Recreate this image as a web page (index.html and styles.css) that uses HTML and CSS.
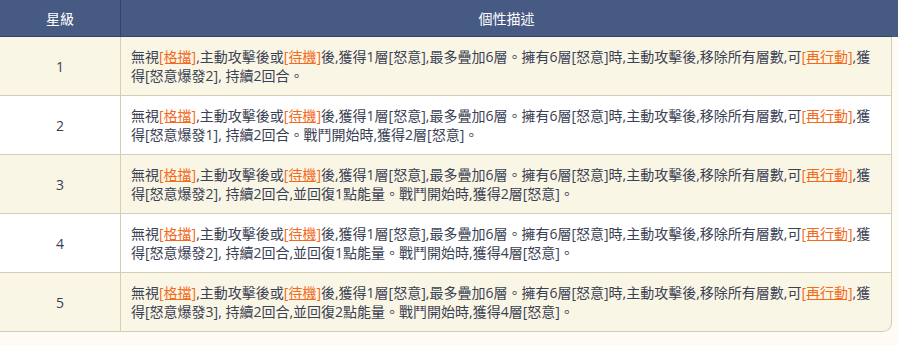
FILE: index.html
```html
<!DOCTYPE html>
<html lang="zh-Hant">
<head>
<meta charset="utf-8">
<link rel="stylesheet" href="styles.css">
</head>
<body>
<div class="wrap">
<table class="tbl">
<thead>
<tr><th class="c1">星級</th><th class="c2">個性描述</th></tr>
</thead>
<tbody>
<tr class="odd"><td class="c1">1</td><td class="c2">無視<a>[格擋]</a>,主動攻擊後或<a>[待機]</a>後,獲得1層[怒意],最多疊加6層。擁有6層[怒意]時,主動攻擊後,移除所有層數,可<a>[再行動]</a>,獲得[怒意爆發2], 持續2回合。</td></tr>
<tr><td class="c1">2</td><td class="c2">無視<a>[格擋]</a>,主動攻擊後或<a>[待機]</a>後,獲得1層[怒意],最多疊加6層。擁有6層[怒意]時,主動攻擊後,移除所有層數,可<a>[再行動]</a>,獲得[怒意爆發1], 持續2回合。戰鬥開始時,獲得2層[怒意]。</td></tr>
<tr class="odd"><td class="c1">3</td><td class="c2">無視<a>[格擋]</a>,主動攻擊後或<a>[待機]</a>後,獲得1層[怒意],最多疊加6層。擁有6層[怒意]時,主動攻擊後,移除所有層數,可<a>[再行動]</a>,獲得[怒意爆發2], 持續2回合,並回復1點能量。戰鬥開始時,獲得2層[怒意]。</td></tr>
<tr><td class="c1">4</td><td class="c2">無視<a>[格擋]</a>,主動攻擊後或<a>[待機]</a>後,獲得1層[怒意],最多疊加6層。擁有6層[怒意]時,主動攻擊後,移除所有層數,可<a>[再行動]</a>,獲得[怒意爆發2], 持續2回合,並回復1點能量。戰鬥開始時,獲得4層[怒意]。</td></tr>
<tr class="odd last"><td class="c1">5</td><td class="c2">無視<a>[格擋]</a>,主動攻擊後或<a>[待機]</a>後,獲得1層[怒意],最多疊加6層。擁有6層[怒意]時,主動攻擊後,移除所有層數,可<a>[再行動]</a>,獲得[怒意爆發3], 持續2回合,並回復2點能量。戰鬥開始時,獲得4層[怒意]。</td></tr>
</tbody>
</table>
</div>
</body>
</html>
```
FILE: styles.css
```css
html, body {
  margin: 0;
  padding: 0;
  background: #fdfbf3;
}
body {
  font-family: "Open Sans", "Noto Sans CJK TC", sans-serif;
  font-size: 14px;
  color: #3a4152;
}
.wrap {
  width: 892px;
}
.tbl {
  width: 892px;
  border-collapse: separate;
  border-spacing: 0;
  table-layout: fixed;
}
.tbl th {
  background: #475a84;
  color: #ffffff;
  font-weight: normal;
  height: 36px;
  padding: 0;
  border-bottom: 1px solid #364566;
  text-align: center;
  font-size: 14px;
}
.tbl th.c1 {
  width: 120px;
  border-right: 1px solid #364566;
}
.tbl th.c2 {
  box-shadow: 7px 0 0 #475a84;
}
.tbl td {
  border-bottom: 1px solid #d5cdb4;
  line-height: 19px;
  padding: 10px 14px 10px 10px;
  background: #ffffff;
  vertical-align: middle;
}
.tbl tr.odd td {
  background: #faf6e6;
}
.tbl td.c1 {
  text-align: center;
  border-right: 1px solid #d5cdb4;
  padding: 0;
}
.tbl td.c2 {
  border-right: 1px solid #d5cdb4;
}
.tbl tr.last td.c2 {
  border-bottom-right-radius: 9px;
}
.tbl a {
  color: #f26a1b;
  text-decoration: underline;
}
```
